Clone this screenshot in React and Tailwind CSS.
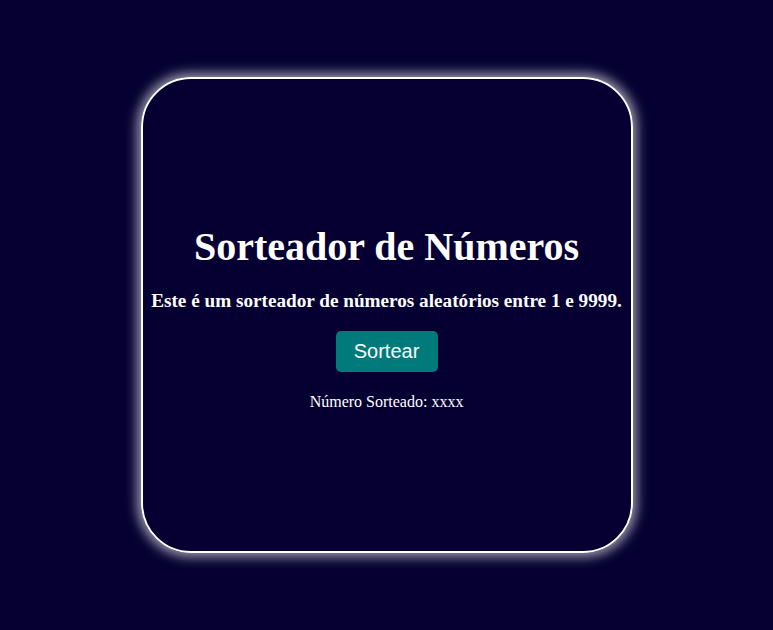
import React, { useState } from "react";

export default function App() {
  const [numero, setNumero] = useState("xxxx");

  const sortear = () => {
    setNumero(Math.floor(Math.random() * 9999) + 1);
  };

  return (
    <div className="min-h-screen w-full bg-[#050031] flex items-center justify-center font-['Liberation_Serif',serif] text-white">
      <div className="w-[492px] h-[476px] pt-[5px] rounded-[50px] border-2 border-white shadow-[0_0_12px_4px_rgba(255,255,255,0.6)] flex flex-col items-center justify-center text-center">
        <h1 className="text-[40px] font-bold leading-tight">Sorteador de Números</h1>
        <h3 className="mt-[17px] text-[19.2px] font-bold leading-tight">
          Este é um sorteador de números aleatórios entre 1 e 9999.
        </h3>
        <button
          onClick={sortear}
          className="mt-[18px] w-[102px] h-[41px] rounded-[5px] bg-[#007a7a] text-white text-[20px] font-['Liberation_Sans',Arial,sans-serif]"
        >
          Sortear
        </button>
        <p className="mt-[18px] text-base">Número Sorteado: {numero}</p>
      </div>
    </div>
  );
}
